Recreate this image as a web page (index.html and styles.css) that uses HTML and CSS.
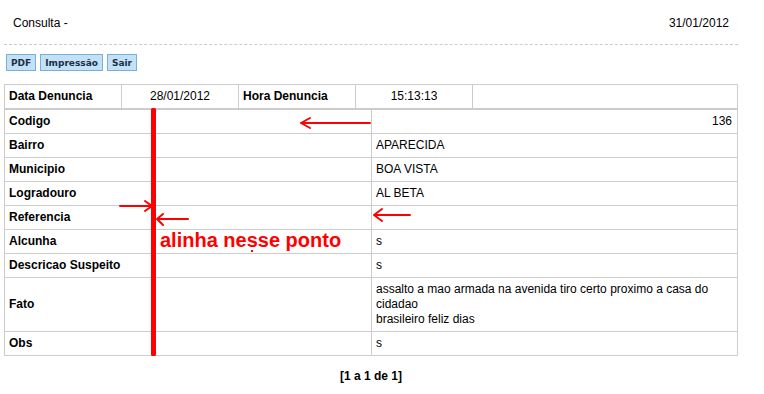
FILE: index.html
```html
<!DOCTYPE html>
<html lang="pt-BR">
<head>
  <meta charset="UTF-8">
  <title>Consulta</title>
  <link rel="stylesheet" href="styles.css">
</head>
<body>
  <div class="page">
    <div class="topo">
      <span class="titulo">Consulta -</span>
      <span class="data">31/01/2012</span>
    </div>

    <div class="acoes">
      <button class="btn">PDF</button>
      <button class="btn">Impressão</button>
      <button class="btn">Sair</button>
    </div>

    <table class="tabela cabecalho">
      <colgroup>
        <col class="col-curta">
        <col class="col-curta">
        <col class="col-curta">
        <col class="col-curta">
        <col>
      </colgroup>
      <tr>
        <td class="rotulo">Data Denuncia</td>
        <td class="centro">28/01/2012</td>
        <td class="rotulo">Hora Denuncia</td>
        <td class="centro">15:13:13</td>
        <td></td>
      </tr>
    </table>

    <table class="tabela detalhe">
      <colgroup>
        <col class="col-metade">
        <col>
      </colgroup>
      <tr><td class="rotulo">Codigo</td><td class="valor direita">136</td></tr>
      <tr><td class="rotulo">Bairro</td><td class="valor">APARECIDA</td></tr>
      <tr><td class="rotulo">Municipio</td><td class="valor">BOA VISTA</td></tr>
      <tr><td class="rotulo">Logradouro</td><td class="valor">AL BETA</td></tr>
      <tr><td class="rotulo">Referencia</td><td class="valor"></td></tr>
      <tr><td class="rotulo">Alcunha</td><td class="valor">s</td></tr>
      <tr><td class="rotulo">Descricao Suspeito</td><td class="valor">s</td></tr>
      <tr>
        <td class="rotulo">Fato</td>
        <td class="valor">assalto a mao armada na avenida tiro certo proximo a casa do cidadao<br>brasileiro feliz dias</td>
      </tr>
      <tr><td class="rotulo">Obs</td><td class="valor">s</td></tr>
    </table>

    <div class="paginacao">[1 a 1 de 1]</div>

    <!-- marcacoes em vermelho por cima da tabela -->
    <svg class="marcacao" width="764" height="394" viewBox="0 0 764 394">
      <g fill="none" stroke="#ff0000" stroke-width="2" stroke-linecap="round">
        <path d="M370 123 H301 M301 123 L310 118 M301 123 L310 128" />
        <path d="M120 206 H152 M152 206 L145 201 M152 206 L145 211" />
        <path d="M188 219 H157 M157 219 L163 214 M157 219 L163 225" />
        <path d="M410 215 H374 M374 215 L382 209 M374 215 L382 221" />
      </g>
      <rect x="151" y="108" width="5" height="248" rx="1.5" fill="#ff0000" />
      <rect x="251" y="250" width="2" height="2" fill="#ff0000" />
      <text x="160" y="247" class="nota">alinha nesse ponto</text>
    </svg>
  </div>
</body>
</html>
```

FILE: styles.css
```css
body {
  margin: 0;
  font-family: "Liberation Sans", Arial, sans-serif;
  font-size: 12px;
  color: #000;
  background-color: #fff;
}
.page {
  position: relative;
  width: 734px;
  margin-left: 4px;
}
.topo {
  display: flex;
  justify-content: space-between;
  height: 42px;
  line-height: 42px;
  padding: 2px 9px 0;
  border-bottom: 1px dashed #ccc;
}
.acoes {
  display: flex;
  gap: 4px;
  margin-top: 9px;
  margin-left: 2px;
}
.btn {
  height: 17px;
  padding: 0 4px;
  font-family: "DejaVu Sans", Verdana, sans-serif;
  font-size: 9px;
  font-weight: bold;
  color: #1c2f46;
  background-color: #c2e1f6;
  border: 1px solid #78b1d8;
  cursor: pointer;
}
.tabela {
  width: 100%;
  border-collapse: collapse;
  table-layout: fixed;
}
.tabela td {
  border: 1px solid #ccc;
  padding: 4px;
  line-height: 15px;
  vertical-align: middle;
  overflow: hidden;
  white-space: normal;
}
.cabecalho {
  margin-top: 13px;
}
.col-curta {
  width: 117px;
}
.col-metade {
  width: 367px;
}
.rotulo {
  font-weight: bold;
}
.centro {
  text-align: center;
}
.valor {
  text-align: left;
}
.direita {
  text-align: right;
  padding-right: 5px !important;
}
.paginacao {
  margin-top: 13px;
  line-height: 15px;
  text-align: center;
  font-weight: bold;
}
.marcacao {
  position: absolute;
  top: 0;
  left: -4px;
  pointer-events: none;
}
.nota {
  font-family: "Liberation Sans", Arial, sans-serif;
  font-size: 20px;
  font-weight: bold;
  fill: #ff0000;
}
```
